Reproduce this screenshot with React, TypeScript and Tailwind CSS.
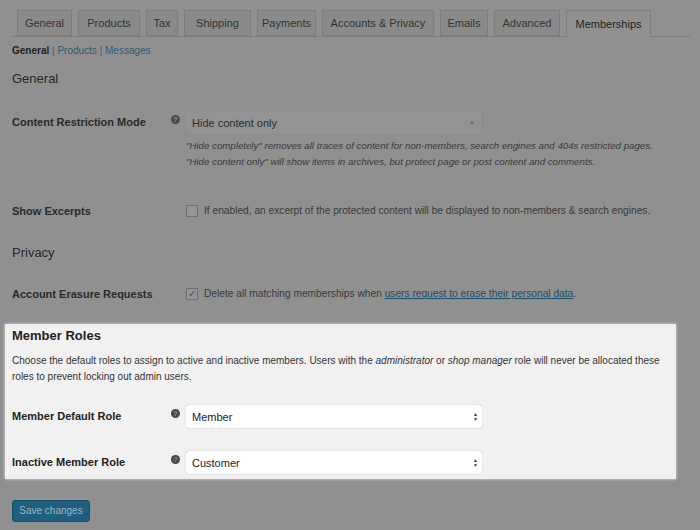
const TABS = [
  { label: "General", w: 55 },
  { label: "Products", w: 62 },
  { label: "Tax", w: 32 },
  { label: "Shipping", w: 67 },
  { label: "Payments", w: 59 },
  { label: "Accounts & Privacy", w: 112 },
  { label: "Emails", w: 48 },
  { label: "Advanced", w: 66 },
];

function Help() {
  return (
    <span className="w-[15px] shrink-0 pt-[4px]">
      <svg width="9" height="9" viewBox="0 0 10 10">
        <circle cx="5" cy="5" r="5" fill="#4a4a4a" />
        <text x="5" y="8" textAnchor="middle" fontSize="8" fontWeight="bold" fill="#909090" fontFamily="Liberation Sans">?</text>
      </svg>
    </span>
  );
}

function SelectBox({ value, light, arrows }: { value: string; light?: boolean; arrows?: boolean }) {
  return (
    <div className={`flex h-[23px] w-[296px] items-center justify-between rounded-[3px] pl-[6px] pr-[4px] text-[11px] ${light ? "bg-white text-[#222] shadow-[0_0_1px_rgba(0,0,0,0.4)]" : "bg-[#939393] text-[#2e2e2e] shadow-[0_0_1px_rgba(0,0,0,0.3)]"}`}>
      <span>{value}</span>
      {arrows ? (
        <span className="flex flex-col text-[5px] leading-[5px] text-[#333]"><span>▲</span><span>▼</span></span>
      ) : (
        <span className="pr-[3px] text-[6px] text-[#666]">▼</span>
      )}
    </div>
  );
}

export default function App() {
  return (
    <div className="h-[530px] w-[700px] overflow-hidden bg-[#909090] text-[11px] leading-[16px] text-[#2b2b2b]" style={{ fontFamily: '"Liberation Sans", Arial, sans-serif' }}>
      {/* Tabs */}
      <div className="ml-[12px] mr-[10px] mt-[10px] flex gap-[6px] border-b border-[#7e7e7e] pl-[5px]">
        {TABS.map(t => (
          <div key={t.label} style={{ width: t.w }} className="mb-[-1px] flex h-[26px] items-center justify-center border border-[#7e7e7e] bg-[#8a8a8a] text-[11px] text-[#333]">
            {t.label}
          </div>
        ))}
        <div className="mb-[-1px] flex h-[27px] w-[85px] items-center justify-center border border-b-0 border-[#7e7e7e] bg-[#909090] text-[11px] text-[#1f1f1f]">
          Memberships
        </div>
      </div>

      <div className="ml-[12px] mt-[6px] text-[10px]">
        <span className="font-bold text-[#222]">General</span>
        <span className="text-[#555]"> | </span>
        <span className="text-[#2e5a73]">Products</span>
        <span className="text-[#555]"> | </span>
        <span className="text-[#2e5a73]">Messages</span>
      </div>

      <div className="ml-[12px] mt-[11px] text-[13px] leading-[18px] text-[#262626]">General</div>

      <div className="mt-[23px] flex pl-[12px]">
        <div className="w-[159px] pt-[3px] font-bold text-[#2a2a2a]">Content Restriction Mode</div>
        <Help />
        <div>
          <SelectBox value="Hide content only" />
          <div className="mt-[4px] whitespace-nowrap text-[9.7px] italic leading-[16px] text-[#3a3a3a]">
            <div>"Hide completely" removes all traces of content for non-members, search engines and 404s restricted pages.</div>
            <div>"Hide content only" will show items in archives, but protect page or post content and comments.</div>
          </div>
        </div>
      </div>

      <div className="mt-[33px] flex items-center pl-[12px]">
        <div className="w-[174px] font-bold text-[#2a2a2a]">Show Excerpts</div>
        <span className="mr-[6px] h-[12px] w-[12px] border border-[#6f6f6f] bg-[#959595]" />
        <span className="whitespace-nowrap text-[10.2px] text-[#3a3a3a]">If enabled, an excerpt of the protected content will be displayed to non-members &amp; search engines.</span>
      </div>

      <div className="ml-[12px] mt-[25px] text-[13px] leading-[18px] text-[#262626]">Privacy</div>

      <div className="mt-[24px] flex items-center pl-[12px]">
        <div className="w-[174px] font-bold text-[#2a2a2a]">Account Erasure Requests</div>
        <span className="mr-[6px] flex h-[12px] w-[12px] items-center justify-center border border-[#6f6f6f] bg-[#959595] text-[10px] leading-none text-[#1d5c7b]">✓</span>
        <span className="whitespace-nowrap text-[10.2px] text-[#3a3a3a]">
          Delete all matching memberships when <span className="text-[#1d4e6a] underline">users request to erase their personal data</span>.
        </span>
      </div>

      {/* Highlighted panel */}
      <div className="ml-[5px] mt-[22px] h-[155px] w-[671px] bg-[#f1f1f1] px-[7px] pt-[3px] shadow-[0_0_3px_rgba(255,255,255,0.7)]">
        <div className="text-[13px] font-bold leading-[18px] text-[#1f1f1f]">Member Roles</div>
        <div className="mt-[8px] text-[10px] leading-[16px] text-[#333]">
          Choose the default roles to assign to active and inactive members. Users with the <i>administrator</i> or <i>shop manager</i> role will never be allocated these<br />roles to prevent locking out admin users.
        </div>
        <div className="mt-[20px] flex">
          <div className="w-[159px] pt-[3px] font-bold text-[#222]">Member Default Role</div>
          <Help />
          <SelectBox value="Member" light arrows />
        </div>
        <div className="mt-[23px] flex">
          <div className="w-[159px] pt-[3px] font-bold text-[#222]">Inactive Member Role</div>
          <Help />
          <SelectBox value="Customer" light arrows />
        </div>
      </div>

      <div className="ml-[12px] mt-[21px] flex h-[22px] w-[78px] items-center justify-center rounded-[3px] border border-[#17506b] bg-[#1f5f7e] text-[10px] text-[#9bb6c4]">
        Save changes
      </div>
    </div>
  );
}
